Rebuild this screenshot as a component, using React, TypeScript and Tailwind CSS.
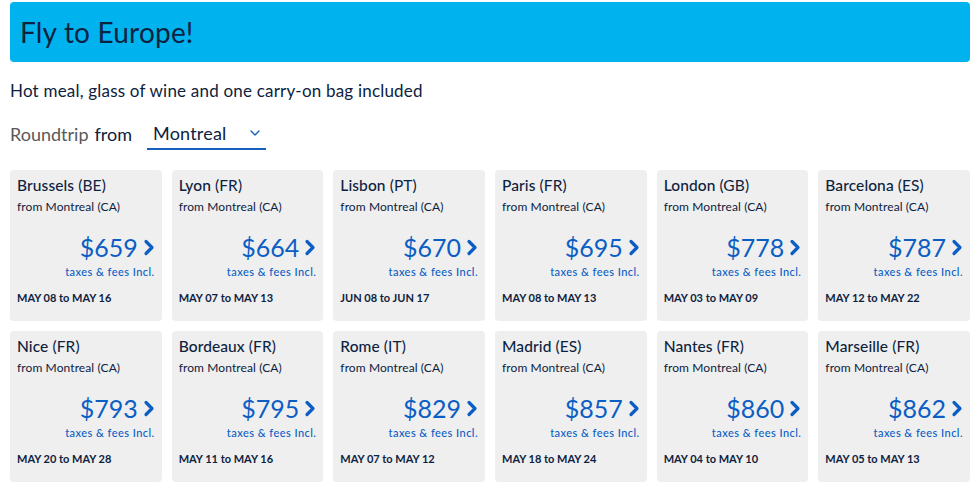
import { ChevronDown } from "lucide-react";

type Deal = {
  city: string;
  code: string;
  price: number;
  dates: string;
};

const DEALS: Deal[] = [
  { city: "Brussels", code: "BE", price: 659, dates: "MAY 08 to MAY 16" },
  { city: "Lyon", code: "FR", price: 664, dates: "MAY 07 to MAY 13" },
  { city: "Lisbon", code: "PT", price: 670, dates: "JUN 08 to JUN 17" },
  { city: "Paris", code: "FR", price: 695, dates: "MAY 08 to MAY 13" },
  { city: "London", code: "GB", price: 778, dates: "MAY 03 to MAY 09" },
  { city: "Barcelona", code: "ES", price: 787, dates: "MAY 12 to MAY 22" },
  { city: "Nice", code: "FR", price: 793, dates: "MAY 20 to MAY 28" },
  { city: "Bordeaux", code: "FR", price: 795, dates: "MAY 11 to MAY 16" },
  { city: "Rome", code: "IT", price: 829, dates: "MAY 07 to MAY 12" },
  { city: "Madrid", code: "ES", price: 857, dates: "MAY 18 to MAY 24" },
  { city: "Nantes", code: "FR", price: 860, dates: "MAY 04 to MAY 10" },
  { city: "Marseille", code: "FR", price: 862, dates: "MAY 05 to MAY 13" },
];

function Chevron() {
  return (
    <svg width="12" height="17" viewBox="0 0 12 17" className="ml-[5px] mt-[1px]">
      <path
        d="M3 2.5 L9 8.5 L3 14.5"
        fill="none"
        stroke="#0b5ec4"
        strokeWidth="3.2"
        strokeLinecap="round"
        strokeLinejoin="round"
      />
    </svg>
  );
}

function DealCard({ deal }: { deal: Deal }) {
  return (
    <div className="bg-[#efefef] rounded-[4px] h-[151px] pl-[7px] pr-[7px] pt-[5px] flex flex-col text-[#0d2240]">
      <p className="text-[15.5px] leading-[20px] font-medium tracking-[0.1px]">
        {deal.city} <span className="font-normal">({deal.code})</span>
      </p>
      <p className="text-[12px] leading-[16px] mt-[4px] tracking-[0.1px]">from Montreal (CA)</p>
      <div className="flex items-center justify-end mt-[17px] text-[#0b5ec4]">
        <span className="text-[25px] leading-[30px]">${deal.price}</span>
        <Chevron />
      </div>
      <p className="text-[11px] leading-[14px] text-right text-[#0b5ec4] mt-[3px] tracking-[0.45px] font-medium">
        taxes &amp; fees Incl.
      </p>
      <p className="text-[11px] leading-[14px] font-bold mt-[12px]">{deal.dates}</p>
    </div>
  );
}

export default function App() {
  return (
    <div
      className="w-[980px] h-[488px] bg-white px-[10px] pt-[2px] overflow-hidden"
      style={{ fontFamily: "Lato, 'Noto Sans', sans-serif" }}
    >
      <div className="bg-[#00b2ee] rounded-[4px] h-[60px] flex items-center pl-[10px]">
        <h1 className="text-[28px] text-[#0d2240] leading-none tracking-[0.2px]">Fly to Europe!</h1>
      </div>
      <p className="text-[17px] text-[#0d2240] mt-[18px] leading-[22px] tracking-[0.2px]">
        Hot meal, glass of wine and one carry-on bag included
      </p>
      <div className="flex items-end mt-[19px]">
        <span className="text-[18px] leading-[24px] text-[#595959] pb-[4px]">Roundtrip</span>
        <span className="text-[18px] leading-[24px] text-[#0d2240] ml-[6px] pb-[4px]">from</span>
        <div className="ml-[15px] w-[119px] border-b-2 border-[#1560bd] flex items-center justify-between pl-[6px] pr-[3px] pb-[3px]">
          <span className="text-[18px] leading-[24px] text-[#0d2240] tracking-[0.2px]">Montreal</span>
          <ChevronDown size={16} strokeWidth={2} color="#1560bd" />
        </div>
      </div>
      <div className="grid grid-cols-6 gap-x-[10px] gap-y-[10px] mt-[20px]">
        {DEALS.map((d) => (
          <DealCard key={d.city} deal={d} />
        ))}
      </div>
    </div>
  );
}
